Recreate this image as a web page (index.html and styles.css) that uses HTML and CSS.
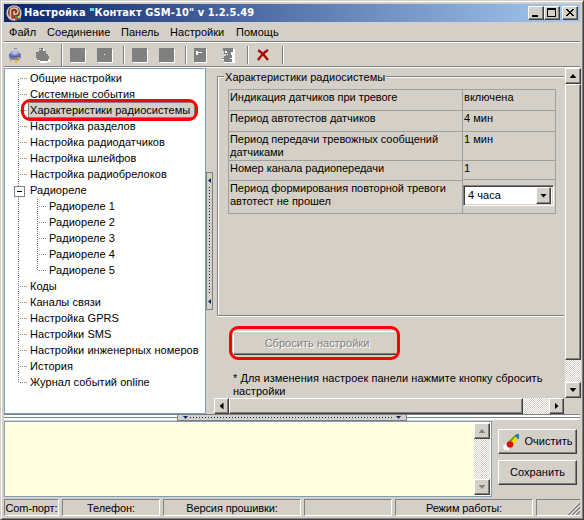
FILE: index.html
```html
<!DOCTYPE html>
<html lang="ru">
<head>
<meta charset="utf-8">
<title>Настройка "Контакт GSM-10" v 1.2.5.49</title>
<link rel="stylesheet" href="styles.css">
</head>
<body>
<div class="window">
  <header class="titlebar">
    <svg class="app-icon" width="16" height="16" viewBox="0 0 16 16"><circle cx="8" cy="8" r="7.7" fill="#c9c5c0"/><circle cx="8" cy="7.5" r="6" fill="#7b3624"/><path d="M4.500 13V6q0-3 3.500-3q4 0 4 3.500q0 3-4 3V6" fill="none" stroke="#e8c4a0" stroke-width="1.600"/><path d="M6 14l2-4" stroke="#d33" stroke-width="1.500"/><path d="M9 11h3v2H9z" fill="#2a9a50"/><path d="M12 11h3v2h-3z" fill="#f1c52c"/><path d="M9 13h3v2H9z" fill="#d8402a"/><path d="M12 13h3v2h-3z" fill="#3160c8"/></svg>
    <h1 class="caption">Настройка "Контакт GSM-10" v 1.2.5.49</h1>
    <div class="win-buttons">
      <button class="raised wbtn"><svg width="14" height="12"><path d="M3 8h6v2H3z"/></svg></button>
      <button class="raised wbtn"><svg width="14" height="12"><path d="M2 1h9v9H2zM3 3v6h7V3z" fill-rule="evenodd"/></svg></button>
      <button class="raised wbtn close"><svg width="14" height="12"><path d="M3 2h2v1h1v1h2V3h1V2h2v1h-1v1H9v1H8v1h1v1h1v1h1v1H9V8H8V7H6v1H5v1H3V8h1V7h1V6h1V5H5V4H4V3H3z"/></svg></button>
    </div>
  </header>
  <nav class="menu"><span class="m1">Файл</span><span class="m2">Соединение</span><span class="m3">Панель</span><span class="m4">Настройки</span><span class="m5">Помощь</span></nav>
  <div class="toolbar">
    <svg width="576" height="22" viewBox="4 44 576 22" shape-rendering="crispEdges">
      <g shape-rendering="auto"><path d="M9 54l3-3h5l4 3v4l-3 2h-7l-2-2z" fill="#777bb7"/><path d="M11 53l2-2h4l2 2-4 2z" fill="#b9bde3"/><path d="M13 48h4l1 3h-4z" fill="#bcc6d4"/><path d="M14 48h3v1h-3z" fill="#8494bb"/><path d="M11 59v3M16 59v4M19 57v4" stroke="#e5a82e" stroke-width="1.500"/><path d="M9 55l3 2 8-1" fill="none" stroke="#5055a2"/></g>
      <path d="M40 49h4v3h2v3h2v2h1v3h2v2h-4v1h-7v-2h-2v-3h-1v-5h3v-2h1z" fill="#fff"/><path d="M39 48h4v3h3v3h2v2h1v3h-1v2h-8v-1h-3v-2h-1v-6h3v-2h2v-1h-2z" fill="#808080"/>
      <path d="M62 44v22M124 46v18M186 46v18M248 46v18M283 46v18" transform="translate(-.5)" stroke="#808080"/><path d="M62 44v22M124 46v18M186 46v18M248 46v18M283 46v18" transform="translate(.5)" stroke="#fff"/>
      <path d="M71 49h15v14H71zM98 49h15v14H98zM133 49h15v14h-15zM160 49h15v14h-15zM195 49h12v14h-12z" fill="#fff"/><path d="M70 48h15v14H70zM97 48h15v14H97zM132 48h15v14h-15zM159 48h15v14h-15zM194 48h12v14h-12z" fill="#808080"/>
      <path d="M104 54h1v1h-1zM196 51h2v1h4v1h-4v2h-2z" fill="#fff"/>
      <path d="M224 49h11v14h-11v-3h-2v-2h2v-2h3v-2h-3z" fill="#fff"/><path d="M223 48h10v4h-2v3h1v7h-8v-3h-2v-1h2v-2h2v-2h-2v-3h-1z" fill="#808080"/><path d="M225 51h2v2h-2zM227 54h1v1h-1zM230 58h2v1h-2z" fill="#fff"/>
      <path d="M258 50.500Q261 51 268 60M268 50Q263 53 258 60" shape-rendering="auto" fill="none" stroke="#b00808" stroke-width="2.400"/>
    </svg>
  </div>

  <main class="workspace">
    <ul class="tree">
      <li>Общие настройки</li><li>Системные события</li><li class="selected"><span>Характеристики радиосистемы</span><i class="mark"></i></li><li>Настройка разделов</li><li>Настройка радиодатчиков</li><li>Настройка шлейфов</li><li>Настройка радиобрелоков</li>
      <li class="parent">Радиореле
        <ul><li>Радиореле 1</li><li>Радиореле 2</li><li>Радиореле 3</li><li>Радиореле 4</li><li>Радиореле 5</li></ul></li>
      <li>Коды</li><li>Каналы связи</li><li>Настройка GPRS</li><li>Настройки SMS</li><li>Настройки инженерных номеров</li><li>История</li><li class="last">Журнал событий online</li>
    </ul>
    <div class="vsplit"><div class="vgrip"><i class="left"></i><i class="vdots"></i><i class="left"></i></div></div>
    <section class="panel">
      <div class="view">
        <fieldset class="group"><legend>Характеристики радиосистемы</legend>
          <div class="params">
            <div class="names"><p class="r1">Индикация датчиков при тревоге</p><p class="r2">Период автотестов датчиков</p><p class="r3">Период передачи тревожных сообщений<br>датчиками</p><p class="r4">Номер канала радиопередачи</p><p class="r5">Период формирования повторной тревоги<br>автотест не прошел</p></div>
            <div class="values"><p class="r1">включена</p><p class="r2">4 мин</p><p class="r3">1 мин</p><p class="r4">1</p><div class="r5"><div class="combo"><span>4 часа</span><button class="raised"><i class="down"></i></button></div></div></div>
          </div>
        </fieldset>
        <div class="reset"><button class="resetbtn">Сбросить настройки</button></div>
        <p class="note">* Для изменения настроек панели нажмите кнопку сбросить<br>настройки</p>
      </div>
      <div class="vscroll"><button class="raised"><i class="up"></i></button><div class="raised thumb"></div><div class="space"></div><button class="raised"><i class="down"></i></button></div>
      <div class="hscroll"><button class="raised"><i class="prev"></i></button><div class="raised thumb"></div><div class="space"></div><button class="raised"><i class="next"></i></button></div>
    </section>
  </main>

  <div class="hsplit"><div class="hgrip"><i class="down"></i><i class="hdots"></i><i class="down"></i></div></div>

  <section class="bottom">
    <div class="log"><div class="vscroll off"><button class="raised"><i class="up"></i></button><div class="space"></div><button class="raised"><i class="down"></i></button></div></div>
    <div class="actions">
      <button class="raised action clear"><svg width="18" height="18" viewBox="0 0 18 18"><path d="M1 12h2v-1h1v1h3v2h2v1H7v2H4v-1H3v1H2z" fill="#fff"/><path d="M6 9l7-8 4 4-7 9z" fill="#e8e010"/><path d="M6 9l7-7 1 1-7 8z" fill="#8b8a20"/><path d="M13 2l2-1h2v5h-1l-3-3z" fill="#1878d8"/><circle cx="8" cy="11.500" r="3.300" fill="#d81010"/></svg><span>Очистить</span></button>
      <button class="raised action"><span>Сохранить</span></button>
    </div>
  </section>
  <footer class="status"><span>Com-порт:</span><span>Телефон:</span><span>Версия прошивки:</span><span></span><span>Режим работы:</span><span><svg width="12" height="12"><path d="M0 12L12 0M4 12l8-8M8 12l4-4" stroke="#808080" stroke-width="1.800"/><path d="M-1.500 12L12-1.500M2.500 12L12 2.500M6.500 12L12 6.500" stroke="#fff"/></svg></span></footer>
</div>
</body>
</html>
```
FILE: styles.css
```css
* { box-sizing: border-box; }
body { margin: 0; font: 11px/13px "Liberation Sans", sans-serif; letter-spacing: .04px; color: #000; }
p, h1, ul, fieldset { margin: 0; padding: 0; }
button { font: inherit; letter-spacing: inherit; padding: 0; margin: 0; color: inherit; }
svg { display: block; }
i { display: block; }
.window { width: 584px; height: 520px; background: #d4d0c8; padding: 3px 2px 2px 3px; border: 1px solid #d4d0c8; border-right-color: #404040; border-bottom-color: #404040; box-shadow: inset 1px 1px #fff, inset -1px -1px #808080; display: flex; flex-direction: column; }
.raised { background: #d4d0c8; border: 1px solid #fff; border-right-color: #404040; border-bottom-color: #404040; box-shadow: inset -1px -1px #808080; display: flex; align-items: center; justify-content: center; }
.titlebar { width: 576px; height: 18px; background: linear-gradient(90deg, #0a246a, #a6caf0); display: flex; align-items: center; padding: 0 2px; }
.caption { color: #fff; font: bold 11px/18px "DejaVu Sans Condensed", "DejaVu Sans", sans-serif; font-stretch: condensed; letter-spacing: .1px; margin-left: 2px; white-space: nowrap; }
.app-icon { flex: none; }
.win-buttons { display: flex; margin-left: auto; }
.wbtn { width: 16px; height: 14px; }
.wbtn.close { margin-left: 2px; }
.menu { height: 20px; display: flex; line-height: 20px; padding-left: 5px; border-bottom: 1px solid #808080; box-shadow: 0 1px #fff; flex: none; width: 576px; }
.m1 { width: 38px; } .m2 { width: 74px; } .m3 { width: 49px; } .m4 { width: 66px; }
.toolbar { width: 576px; height: 25px; padding-top: 2px; border-bottom: 1px solid #808080; box-shadow: 0 1px #fff; flex: none; }
.workspace { margin-top: 1px; height: 346px; display: flex; flex: none; }
.tree { width: 202px; border: 1px solid #7f9db9; background: #fff; list-style: none; padding: 1px 0 0 13px; }
.tree ul { list-style: none; }
.tree li { position: relative; line-height: 16px; padding-left: 12px; white-space: nowrap; }
.tree li::before { content: ""; position: absolute; left: 0; top: 8px; width: 9px; height: 1px; background: repeating-linear-gradient(90deg, #808080 0 1px, #fff 1px 2px); }
.tree li::after { content: ""; position: absolute; left: 0; top: 0; bottom: 0; width: 1px; background: repeating-linear-gradient(#fff 0 1px, #808080 1px 2px); }
.tree > li:first-child::after { top: 8px; }
.tree .last::after, .tree ul li:last-child::after { bottom: 7px; }
.tree ul { padding-left: 7px; }
.tree .selected span { display: inline-block; height: 16px; line-height: 14px; background: #d4d0c8; border: 1px solid #808080; margin-left: -2px; padding: 0 1px; width: 167px; vertical-align: top; }
.mark { position: absolute; left: 3px; top: -3px; width: 177px; height: 22px; border: 3px solid #f00; border-radius: 9px; }
.tree .parent::before { z-index: 1; left: -4px; top: 4px; width: 9px; height: 9px; border: 1px solid #808080; background: linear-gradient(#000, #000) center / 5px 1px no-repeat #fff; }
.vsplit { width: 8px; display: flex; align-items: flex-start; }
.vgrip { width: 7px; height: 138px; margin-top: 104px; border: 1px solid #808080; display: flex; flex-direction: column; align-items: center; justify-content: space-between; padding: 5px 0; }
.left, .prev { width: 3px; height: 7px; background: #0a246a; clip-path: polygon(100% 0, 100% 100%, 0 50%); }
.left { height: 5px; }
.vdots { width: 1px; height: 108px; background: repeating-linear-gradient(#0a246a 0 1px, transparent 1px 3px); }
.panel { width: 367px; display: grid; grid-template: 330px 16px / 350px 17px; }
.view { overflow: hidden; }
.group { position: relative; margin: 8px 0 0 3px; width: 360px; height: 240px; border: 1px solid #808080; box-shadow: inset 1px 1px #fff, 0 1px #fff; padding: 12px 0 0 10px; }
.group legend { position: absolute; left: 6px; top: -6px; padding: 0 1px; background: #d4d0c8; white-space: nowrap; }
.params { display: flex; width: 328px; height: 125px; border: 1px solid #a0a0a0; }
.names { width: 234px; border-right: 1px solid #a0a0a0; letter-spacing: -.04px; }
.values { flex: 1; }
.names > *, .values > * { border-bottom: 1px solid #a0a0a0; padding: 1px 0 0 1px; white-space: nowrap; }
.r1, .r2 { height: 21px; } .r3 { height: 29px; } .r4 { height: 20px; }
.values .r4 { height: 19px; }
.names > .r5, .values > .r5 { border-bottom: 0; }
.values > .r5 { padding: 5px 1px 0 0; }
.combo { height: 21px; background: #fff; border: 1px solid #808080; border-right-color: #fff; border-bottom-color: #fff; box-shadow: inset 1px 1px #404040, inset -1px -1px #d4d0c8; display: flex; justify-content: space-between; align-items: center; padding: 2px 2px 2px 4px; }
.combo button { width: 15px; height: 17px; }
.down, .up { width: 7px; height: 4px; background: #000; clip-path: polygon(0 0, 100% 0, 50% 100%); }
.up { clip-path: polygon(0 100%, 100% 100%, 50% 0); }
.reset { margin: 10px 0 0 15px; width: 171px; height: 34px; border: 3px solid #f00; border-radius: 9px; padding: 2px 1px; }
.resetbtn { display: block; width: 163px; height: 24px; background: #d4d0c8; border: 0; border-top: 1px solid #fff; border-left: 1px solid #fff; border-bottom: 1px solid #404040; box-shadow: inset 0 -1px #808080; color: #808080; text-shadow: 1px 1px #fff; padding-left: 4px; }
.note { margin: 12px 0 0 19px; white-space: nowrap; }
.vscroll { display: flex; flex-direction: column; height: 330px; width: 16px; margin-left: 1px; }
.vscroll button { height: 16px; width: 16px; flex: none; }
.vscroll .thumb { height: 276px; flex: none; }
.space { flex: 1; background: repeating-conic-gradient(#fff 0 25%, #d4d0c8 0 50%) 0 0 / 2px 2px; }
.hscroll { display: flex; width: 350px; height: 16px; }
.hscroll button { width: 15px; flex: none; }
.hscroll .thumb { width: 294px; }
.prev, .next { width: 4px; height: 7px; background: #000; }
.next { clip-path: polygon(0 0, 0 100%, 100% 50%); }
.hsplit { height: 7px; flex: none; width: 576px; padding-left: 173px; background: linear-gradient(#808080 0 1px, #fff 1px 3px, #808080 3px 4px, #fff 4px 6px, #d4d0c8 6px); }
.hgrip { width: 230px; height: 7px; background: #d4d0c8; border: 1px solid #808080; display: flex; align-items: center; justify-content: space-between; padding: 0 5px; }
.hgrip .down { background: #0a246a; width: 5px; height: 3px; }
.hdots { width: 204px; height: 1px; background: repeating-linear-gradient(90deg, #0a246a 0 1px, transparent 1px 3px); }
.bottom { display: flex; height: 76px; flex: none; }
.log { width: 488px; background: #ffffe1; border: 1px solid #7f9db9; display: flex; justify-content: flex-end; padding: 1px; }
.off { height: 72px; }
.off .up, .off .down { background: #808080; }
.actions { padding: 8px 0 0 6px; display: flex; flex-direction: column; gap: 6px; }
.action { width: 79px; height: 25px; }
.clear svg { margin-right: 4px; }
.status { display: flex; height: 17px; margin-top: 2px; gap: 3px; width: 576px; letter-spacing: -.1px; }
.status span { flex: none; border: 1px solid #808080; border-right-color: #fff; border-bottom-color: #fff; text-align: center; line-height: 16px; white-space: nowrap; overflow: hidden; }
.status span:nth-child(1) { width: 55px; }
.status span:nth-child(2) { width: 98px; }
.status span:nth-child(3) { width: 138px; }
.status span:nth-child(4) { width: 88px; }
.status span:nth-child(5) { width: 138px; }
.status span:nth-child(6) { flex: 1; display: flex; justify-content: flex-end; align-items: flex-end; border-right: 0; }
```
